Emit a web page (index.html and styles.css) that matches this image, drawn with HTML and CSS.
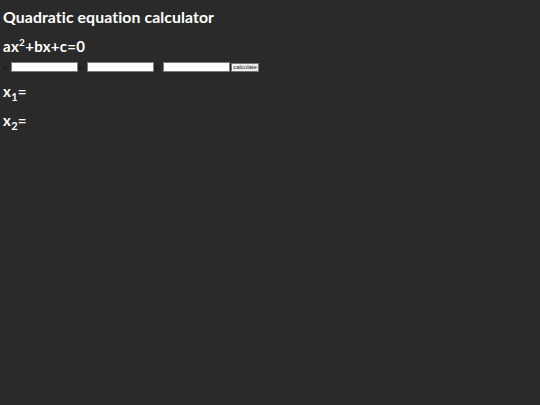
FILE: index.html
```html
<!DOCTYPE html>
<html>
<head>
<meta charset="utf-8">
<link rel="stylesheet" href="styles.css">
</head>
<body>
<div class="page">
  <h1 class="title">Quadratic equation calculator</h1>
  <h2 class="formula">ax<sup>2</sup>+bx+c=0</h2>
  <div class="form">
    <label class="lbl">a:</label><input class="field" type="text">
    <label class="lbl">b:</label><input class="field" type="text">
    <label class="lbl">c:</label><input class="field" type="text">
    <button class="btn">calculate</button>
  </div>
  <h2 class="result">x<sub>1</sub>=</h2>
  <h2 class="result">x<sub>2</sub>=</h2>
</div>
</body>
</html>
```
FILE: styles.css
```css
html, body {
  margin: 0;
  padding: 0;
  background: #2a2a2a;
  height: 100%;
}
.page {
  padding: 8px 3px;
  font-family: Lato, "Liberation Sans", sans-serif;
  color: #ffffff;
}
.title {
  margin: 0;
  font-size: 15.8px;
  font-weight: 700;
  line-height: 18px;
  letter-spacing: 0.1px;
}
.formula {
  margin: 12px 0 0 0;
  font-size: 15px;
  font-weight: 700;
  line-height: 17px;
  letter-spacing: 0.3px;
}
.formula sup {
  font-size: 10px;
  line-height: 0;
}
.form {
  display: flex;
  align-items: center;
  margin-top: 7px;
  height: 10px;
}
.lbl {
  font-family: "Liberation Sans", sans-serif;
  font-size: 6px;
  color: #111111;
  width: 8px;
  flex: none;
}
.field {
  width: 66.5px;
  height: 10px;
  box-sizing: border-box;
  border: 1px solid #7a7a7a;
  background: #ffffff;
  padding: 0;
  margin: 0 1.5px 0 0;
  flex: none;
}
.btn {
  font-family: "Liberation Sans", sans-serif;
  font-size: 6px;
  height: 9px;
  width: 28px;
  padding: 0;
  margin: 0;
  box-sizing: border-box;
  background: #efefef;
  border: 1px solid #767676;
  color: #222;
  flex: none;
}
.result {
  margin: 11px 0 0 0;
  font-size: 15px;
  font-weight: 700;
  line-height: 17px;
  letter-spacing: 0.3px;
}
.result sub {
  font-size: 11px;
  line-height: 0;
}
.result + .result {
  margin-top: 12px;
}
```
